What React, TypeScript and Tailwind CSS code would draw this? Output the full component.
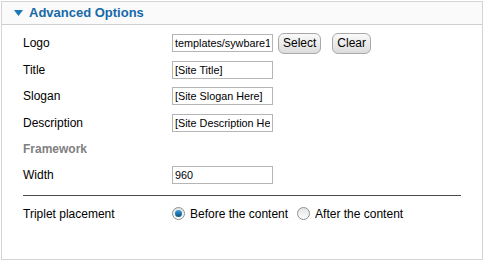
import React from 'react';

const fields = [
  { label: 'Logo', value: 'templates/sywbare1/images/logo.png', buttons: true },
  { label: 'Title', value: '[Site Title]' },
  { label: 'Slogan', value: '[Site Slogan Here]' },
  { label: 'Description', value: '[Site Description Here]' },
];

function Row({ label, children }: { label: string; children?: React.ReactNode }) {
  return (
    <div className="flex h-[26.5px] items-center">
      <div className="w-[149px] shrink-0">{label}</div>
      <div className="flex items-center">{children}</div>
    </div>
  );
}

function TextBox({ value }: { value: string }) {
  return (
    <input
      readOnly
      value={value}
      className="h-[18px] w-[101px] border border-[#b5b5b5] bg-white px-[2px] text-[10.8px] text-black outline-none"
    />
  );
}

function Btn({ children }: { children: React.ReactNode }) {
  return (
    <button
      type="button"
      className="h-[21px] rounded-[6px] border border-[#a9a9a9] bg-gradient-to-b from-[#fafafa] to-[#dcdcdc] px-[4px] text-[12px] text-black"
    >
      {children}
    </button>
  );
}

function Radio({ checked }: { checked?: boolean }) {
  return (
    <span className="flex h-[13px] w-[13px] items-center justify-center rounded-full border border-[#8e8f8f] bg-gradient-to-b from-[#e4e4e4] to-[#fdfdfd]">
      {checked && (
        <span className="h-[7px] w-[7px] rounded-full bg-gradient-to-b from-[#3aa0e0] to-[#0c4f7c]" />
      )}
    </span>
  );
}

export default function App() {
  return (
    <div className="h-[262px] w-[484px] bg-white p-px font-['Liberation_Sans',Arial,sans-serif] text-[12px] text-black">
      <div className="h-[259px] w-[482px] border border-[#d4d4d4]">
        <div className="flex h-[23px] items-center border-b border-[#cfcfcf] bg-[#fafafa] pl-[12px]">
          <svg width="9" height="6" viewBox="0 0 9 6" className="mr-[6px]">
            <polygon points="0,0 9,0 4.5,6" fill="#1a78b8" />
          </svg>
          <span className="text-[13px] font-bold text-[#1669a8]">Advanced Options</span>
        </div>

        <div className="px-[21px] pt-[5px]">
          {fields.map((f) => (
            <Row key={f.label} label={f.label}>
              <TextBox value={f.value} />
              {f.buttons && (
                <div className="ml-[5px] flex gap-[11px]">
                  <Btn>Select</Btn>
                  <Btn>Clear</Btn>
                </div>
              )}
            </Row>
          ))}
          <div className="flex h-[26px] items-center font-bold text-[#808080]">Framework</div>
          <Row label="Width">
            <TextBox value="960" />
          </Row>

          <div className="mt-[6px] border-t border-[#4a4a4a]" />

          <div className="flex h-[36px] items-center">
            <div className="w-[149px] shrink-0">Triplet placement</div>
            <label className="flex items-center gap-[5px]">
              <Radio checked />
              <span>Before the content</span>
            </label>
            <label className="ml-[9px] flex items-center gap-[5px]">
              <Radio />
              <span>After the content</span>
            </label>
          </div>
        </div>
      </div>
    </div>
  );
}
